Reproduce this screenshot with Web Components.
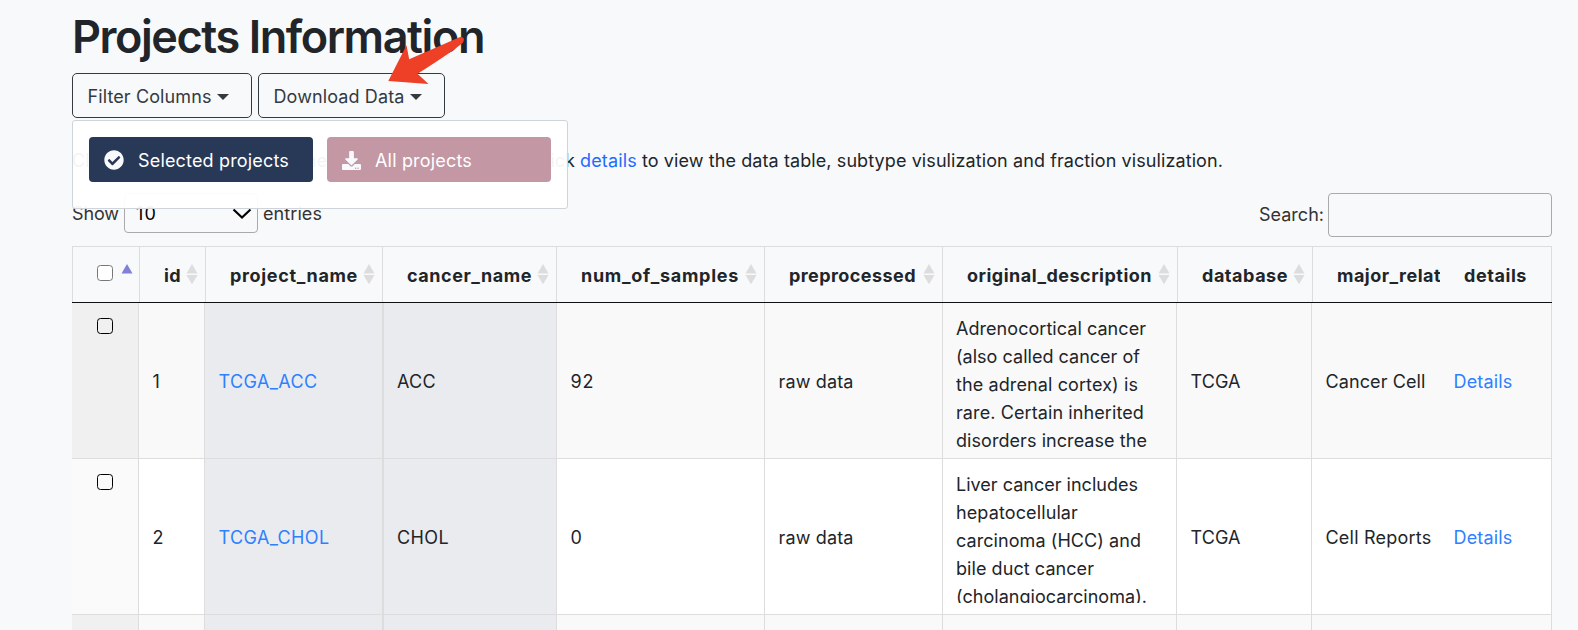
<!DOCTYPE html>
<html lang="en">
<head>
<meta charset="utf-8">
<title>Projects Information</title>
<style>
html,body{margin:0;height:630px;overflow:hidden;background:#f8f9fb}
body{font:400 18px/28px Inter,"Liberation Sans",sans-serif;color:#212529}
</style>
</head>
<body>
<projects-page></projects-page>
<script>
const define = (name, html, setup) => {
  const t = document.createElement('template');
  t.innerHTML = html;
  customElements.define(name, class extends HTMLElement {
    connectedCallback() {
      if (this.shadowRoot) return;
      this.attachShadow({mode: 'open'}).append(t.content.cloneNode(true));
      if (setup) setup(this, this.shadowRoot);
    }
  });
};

/* A run of text tracked to a given advance width. */
define('fit-text', `<style>:host{display:inline-block;white-space:pre}</style><slot></slot>`, el => {
  const w = +el.getAttribute('w');
  const n = el.textContent.length;
  if (w) el.style.letterSpacing = (w - el.getBoundingClientRect().width) / n + 'px';
});

define('drop-button', `<style>
:host{display:flex;box-sizing:border-box;height:45px;border:1px solid #343a40;border-radius:5px;align-items:center;padding:2px 0 0 14.500px;color:#343a40}
i{margin:1px 0 0 5px;border:6px solid transparent;border-top-color:#343a40;border-bottom:0}
</style><slot></slot><i></i>`);

define('menu-action', `<style>
:host{display:flex;box-sizing:border-box;width:224px;height:45px;border-radius:4px;align-items:center;padding:2px 0 0 15px;color:#fff}
::slotted(svg){display:block;margin:-1px 14px 0 0}
</style><slot name="icon"></slot><slot></slot>`);

define('download-menu', `<style>
:host{display:flex;box-sizing:border-box;width:496px;height:89px;gap:14px;padding:16px;border:1px solid #ced4da;border-radius:3px;background:rgba(255,255,255,.95)}
.a{background:#283857}.b{background:#c497a4}
</style>
<menu-action class="a"><svg slot="icon" width="20" height="20" viewBox="0 0 512 512" fill="#f8f9fc"><path d="M504 256c0 137-111 248-248 248S8 393 8 256 119 8 256 8s248 111 248 248zM227.300 387.300l184-184c6.200-6.200 6.200-16.400 0-22.600l-22.600-22.600c-6.200-6.200-16.400-6.200-22.600 0L216 308.100l-70.100-70.100c-6.200-6.200-16.400-6.200-22.600 0l-22.600 22.600c-6.200 6.200-6.200 16.400 0 22.600l104 104c6.200 6.300 16.400 6.300 22.600.1z"/></svg><fit-text w="151">Selected projects</fit-text></menu-action>
<menu-action class="b"><svg slot="icon" width="19" height="19" viewBox="0 0 512 512" fill="#f8f9fc"><path d="M216 0h80c13.300 0 24 10.700 24 24v168h87.700c17.800 0 26.700 21.500 14.100 34.100L269.700 378.300c-7.500 7.500-19.800 7.500-27.300 0L90.100 226.100c-12.600-12.600-3.700-34.100 14.100-34.100H192V24c0-13.300 10.700-24 24-24zm296 376v112c0 13.300-10.700 24-24 24H24c-13.300 0-24-10.700-24-24V376c0-13.300 10.700-24 24-24h146.700l49 49c20.100 20.100 52.500 20.100 72.600 0l49-49H488c13.300 0 24 10.700 24 24zm-124 88c0-11-9-20-20-20s-20 9-20 20 9 20 20 20 20-9 20-20zm64 0c0-11-9-20-20-20s-20 9-20 20 9 20 20 20 20-9 20-20z"/></svg><fit-text w="97">All projects</fit-text></menu-action>`);

define('usage-hint', `<style>
:host{display:grid;grid-template-columns:60px 196px 248px auto auto;justify-content:start;color:#212529}
.r{text-align:right;padding-right:1px}.l{color:#1f6bff;padding-left:4px}.t{padding-left:5px}
</style><span>Click</span><span class="r">project name</span><span class="r">or click</span><span class="l"><fit-text w="57">details</fit-text></span><span class="t"><fit-text w="581">to view the data table, subtype visulization and fraction visulization.</fit-text></span>`);

define('length-control', `<style>
:host{display:flex;color:#333;align-items:center}
.s{display:flex;box-sizing:border-box;width:134px;height:40px;margin:0 5px 0 5px;border:1px solid #aaa;border-radius:4px;align-items:center;justify-content:space-between;padding:2px 5px 0 11px;color:#000}
.o{margin-top:2px}
</style><fit-text class="o" w="47">Show</fit-text><span class="s"><fit-text w="21">10</fit-text><svg width="20" height="12" viewBox="0 0 20 12" fill="none" stroke="#000" stroke-width="2.200"><path d="M1.500 1.500L10 9.500L18.500 1.500"/></svg></span><fit-text class="o" w="59">entries</fit-text>`);

define('search-control', `<style>
:host{display:flex;color:#333;align-items:center}
.s{box-sizing:border-box;width:224px;height:44px;margin-left:4px;border:1px solid #aaa;border-radius:4px}
</style><fit-text w="65">Search:</fit-text><span class="s"></span>`);

define('check-box', `<style>
:host{display:block;box-sizing:border-box;width:16px;height:16px;border:1px solid var(--edge,#000);border-radius:3.500px;background:var(--fill,transparent)}
</style>`);

define('sort-icon', `<style>:host{display:block;width:12px;height:20px}svg{display:block}</style>
<svg width="12" height="20" viewBox="0 0 12 20"><path class="u" d="M0.500 9.500L6 0L11.500 9.500Z" fill="#ddd"/><path class="d" d="M0.500 11L6 20.300L11.500 11Z" fill="#ddd"/></svg>`, (el, r) => {
  if (el.hasAttribute('asc')) {
    r.querySelector('.u').setAttribute('fill', '#8080d8');
    r.querySelector('.d').remove();
  }
});

define('projects-table', `<style>
:host{display:block;width:1480px}
.h,.r{display:grid;box-sizing:border-box}
.h{grid-template-columns:67px 66px 177px 174px 208px 178px 235px 135px 128px 112px;height:57px;border-top:1px solid #ddd;border-bottom:1px solid #111;font-weight:700}
.h>div{box-sizing:border-box;display:flex;align-items:center;justify-content:space-between;border-left:1px solid #ddd;padding:2px 7px 0 24px;overflow:hidden}
.h>div:first-child{padding:0 6px 4px 24px;--edge:#767676;--fill:#fff}
.h>.last{border-left:0;border-right:1px solid #ddd}
.h sort-icon{margin-top:-4px}
.h>div:first-child sort-icon{margin-top:3px}
.r{grid-template-columns:66px 66px 178px 174px 208px 178px 234px 135px 129px 112px;height:156px;border-bottom:1px solid #ddd;background:#fff}
.r>div{box-sizing:border-box;display:flex;align-items:center;border-left:1px solid #ddd;padding:3px 0 0 13.500px;overflow:hidden}
.r>div:first-child{align-items:flex-start;padding:15px 0 0 25px;border:0;background:#fafafa}
.r>div:nth-child(3),.r>div:nth-child(4){background:#eaebef}
.r>div:nth-child(4){border-left-width:2px;padding-left:13px}
.r>div.last{border-left:0;border-right:1px solid #ddd}
.r.odd{background:#f9f9f9}.r.odd>div:first-child{background:#f0f0f0}
.link{color:#2f80ff}
.r>.desc{align-items:flex-start;padding:0 0 0 13px}
.clip{margin-top:12px;height:132px;overflow:hidden}
.clip fit-text{display:block;width:max-content}
</style><div id="t"></div>`, (el, root) => {
  const heads = [['id',17],['project_name',128],['cancer_name',125],['num_of_samples',158],['preprocessed',127],['original_description',185],['database',86]];
  const rows = [
    {v:[['1',9],['TCGA_ACC',99],['ACC',39],['92',24],['raw data',75]], d:[['Adrenocortical cancer',190],['(also called cancer of',184],['the adrenal cortex) is',182],['rare. Certain inherited',188],['disorders increase the',191]], e:[['TCGA',50],['Cancer Cell',100]]},
    {v:[['2',11],['TCGA_CHOL',111],['CHOL',52],['0',12],['raw data',75]], d:[['Liver cancer includes',182],['hepatocellular',122],['carcinoma (HCC) and',185],['bile duct cancer',138],['(cholangiocarcinoma).',191]], e:[['TCGA',50],['Cell Reports',106]]}
  ];
  const f = ([t, w]) => `<fit-text w="${w}">${t}</fit-text>`;
  let html = '<div class="h"><div><check-box></check-box><sort-icon asc></sort-icon></div>';
  html += heads.map(h => `<div>${f(h)}<sort-icon></sort-icon></div>`).join('');
  html += `<div style="padding-right:0">${f(['major_relat',104])}</div><div class="last">${f(['details',63])}</div></div>`;
  rows.forEach((r, i) => {
    html += `<div class="r ${i % 2 ? '' : 'odd'}"><div><check-box></check-box></div>`;
    html += r.v.map((c, j) => `<div class="${j === 1 ? 'link' : ''}">${f(c)}</div>`).join('');
    html += `<div class="desc"><div class="clip">${r.d.map(f).join('')}</div></div>`;
    html += r.e.map(c => `<div>${f(c)}</div>`).join('');
    html += `<div class="last link">${f(['Details',59])}</div></div>`;
  });
  html += '<div class="r odd">' + '<div></div>'.repeat(9) + '<div class="last"></div></div>';
  root.getElementById('t').innerHTML = html;
});

define('projects-page', `<style>
:host{display:block;position:relative;padding-left:72px;width:1506px;height:630px;overflow:hidden}
h1{margin:0;height:73px;box-sizing:border-box;padding-top:7px;font-weight:600;font-size:45px;line-height:59px}
.bar{display:flex;gap:6px}
usage-hint{height:28px;margin-top:29px}
.tools{display:flex;justify-content:space-between;width:1480px;height:44px;margin-top:18px}
.tools length-control{height:40px}
projects-table{margin-top:9px}
download-menu{position:absolute;left:72px;top:120px}
.arrow{position:absolute;left:386px;top:34px}
</style>
<h1><fit-text w="412">Projects Information</fit-text></h1>
<div class="bar"><drop-button style="width:180px"><fit-text w="124">Filter Columns</fit-text></drop-button><drop-button style="width:187px"><fit-text w="131">Download Data</fit-text></drop-button></div>
<usage-hint></usage-hint>
<div class="tools"><length-control></length-control><search-control></search-control></div>
<projects-table></projects-table>
<download-menu></download-menu>
<svg class="arrow" width="80" height="52" viewBox="386 34 80 52"><path d="M388.300 80.900L406.500 45.300L409.200 59.300L459.500 37.300C463.500 35.800 465.500 39.500 462.500 43Q452 52 417.500 73.800L428.500 83.900Z" fill="#ed4026"/></svg>`);
</script>
</body>
</html>
